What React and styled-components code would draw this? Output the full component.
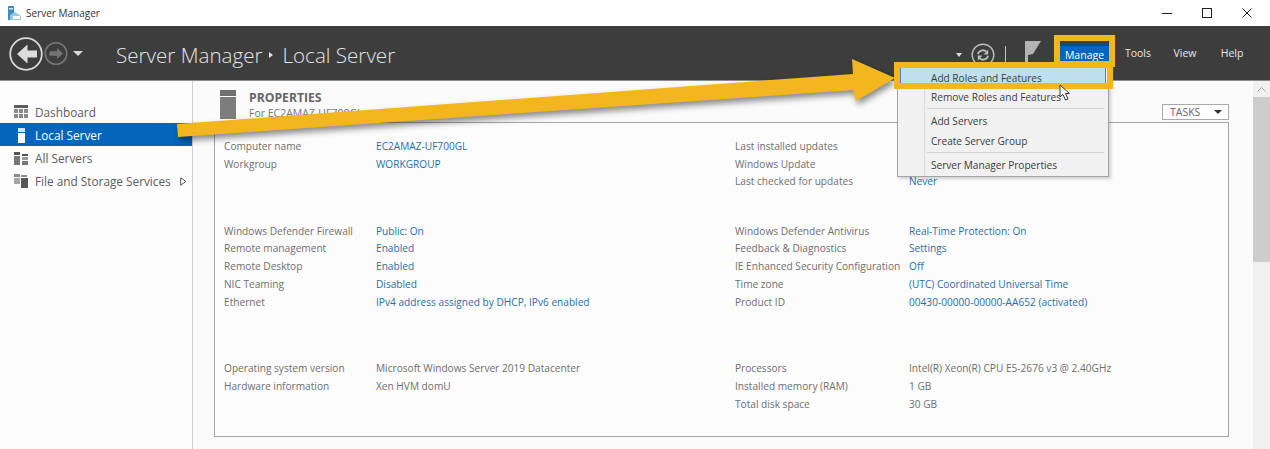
import React from 'react';
import styled, { createGlobalStyle } from 'styled-components';

const Global = createGlobalStyle`
  html, body { margin: 0; padding: 0; background: #fff; overflow: hidden; }
  * { box-sizing: border-box; }
  #root { width: 1270px; height: 449px; }
`;
const FONT = `"Open Sans", "Noto Sans", "Liberation Sans", sans-serif`;

const Window = styled.div`
  position: relative; width: 1270px; height: 449px; overflow: hidden;
  display: flex; flex-direction: column;
  font-family: ${FONT}; font-size: 10.15px; color: #6d6d6d;
`;
const TitleBar = styled.div`
  height: 26px; flex: none; display: flex; align-items: center; padding: 0 3px 0 7px; background: #fff;
`;
const AppName = styled.span`
  margin-left: 5px; font-size: 10px; color: #333; flex: 1;
`;
const WinControls = styled.div`
  display: flex; align-items: center; height: 100%;
`;
const WinButton = styled.div`
  width: 40px; height: 100%; display: flex; align-items: center; justify-content: center; color: #222;
`;
const Header = styled.div`
  height: 55px; flex: none; background: #3d3d3d; display: flex; align-items: center;
  border-bottom: 1px solid #8d8d8d; position: relative;
`;
const NavIcons = styled.div`
  display: flex; align-items: center; width: 116px; padding: 1px 0 0 9px; flex: none;
`;
const Crumbs = styled.div`
  display: flex; align-items: center; flex: 1; padding-top: 3px; font-size: 20.6px; font-weight: 300; color: #e4e4e4;
`;
const CrumbSep = styled.span`
  width: 0; height: 0; margin: 0 9px 0 7px;
  border-left: 4px solid #e4e4e4; border-top: 3.5px solid transparent; border-bottom: 3.5px solid transparent;
`;
const Tools = styled.div`
  display: flex; align-items: center; flex: none; height: 100%;
`;
const MenuItem = styled.div`
  height: 21px; display: flex; align-items: center; justify-content: center;
  font-size: 10.5px; color: ${p => p.$active ? '#fff' : '#e6e6e6'}; width: ${p => p.$w}px;
  background: ${p => p.$active ? '#0366ba' : 'transparent'};
  border-top: ${p => p.$active ? '3px solid #114c80' : 'none'};
  margin-right: ${p => p.$mr || 0}px;
`;
const Body = styled.div`
  flex: 1; display: flex; min-height: 0;
`;
const Sidebar = styled.nav`
  width: 193px; flex: none; background: #fdfdfd; border-right: 1px solid #cfcfcf; padding-top: 18.5px;
`;
const SideRow = styled.div`
  height: 23.2px; display: flex; align-items: center; padding: 1.5px 0 0 14px; gap: 7px; font-size: 11.8px;
  color: ${p => p.$active ? '#fff' : '#5c5c5c'};
  background: ${p => p.$active ? '#0366ba' : 'transparent'};
  width: 192px; position: relative;
`;
const SideIconBox = styled.span`
  width: 14px; height: 16px; display: flex; align-items: center; justify-content: center; flex: none;
`;
const Expand = styled.svg`
  margin-left: auto; margin-right: 5px; flex: none;
`;
const Main = styled.main`
  flex: 1; background: #fbfbfb; padding: 8px 24px 0 21px; min-width: 0; position: relative;
`;
const SectionHead = styled.div`
  display: flex; align-items: flex-start; height: 33px; position: relative; padding-left: 6px;
`;
const HeadText = styled.div`
  margin-left: 13px; padding-top: 1px; display: flex; flex-direction: column;
`;
const HeadTitle = styled.div`
  font-size: 12.2px; font-weight: 700; color: #666; line-height: 15px;
`;
const HeadSub = styled.div`
  font-size: 10.5px; color: #777; line-height: 16px;
`;
const TasksButton = styled.div`
  margin-left: auto; margin-top: 15px; width: 67px; height: 16px; border: 1px solid #aaa;
  display: flex; align-items: center; justify-content: space-between; padding: 0 6px 0 7px;
  font-size: 10.5px; color: #666; background: #fff; line-height: 1;
`;
const Caret = styled.span`
  width: 0; height: 0; border-top: 4px solid #333; border-left: 4.5px solid transparent; border-right: 4.5px solid transparent;
`;
const PropBox = styled.section`
  width: 1015px; height: 315px; border: 1px solid #a6a6a6; background: #fcfcfc; padding: 14px 0 0 9px;
  display: flex; flex-direction: column;
`;
const PropGroup = styled.div`
  display: grid; grid-template-columns: 152px 359px 174px 1fr; grid-auto-rows: 17.75px;
  margin-bottom: ${p => p.$mb}px; align-items: center;
`;
const Label = styled.span`color: #6f6f6f; white-space: nowrap;`;
const Value = styled.span`color: ${p => p.$link ? '#2b6ea6' : '#6f6f6f'}; white-space: nowrap;`;
const Scrollbar = styled.div`
  width: 17px; flex: none; background: #f1f1f1; display: flex; flex-direction: column; align-items: center;
`;
const ScrollUp = styled.div`
  height: 16px; display: flex; align-items: center; justify-content: center; color: #aaa;
`;
const ScrollThumb = styled.div`
  width: 17px; height: 165px; background: #cdcdcd;
`;
const Menu = styled.div`
  position: absolute; left: 897px; top: 67px; width: 212px; height: 110px; background: #f1f1f1;
  border: 1px solid #a4a4a4; box-shadow: 2px 2px 3px rgba(0,0,0,.18); z-index: 3;
  font-size: 10.1px; color: #3c3c3c;
`;
const MenuGutter = styled.div`
  position: absolute; left: 26px; top: 0; bottom: 0; width: 1px; background: #dcdcdc;
`;
const MenuEntry = styled.div`
  height: ${p => p.$h || 20}px; display: flex; align-items: center; padding-left: 33px; position: relative;
`;
const MenuEntryHover = styled(MenuEntry)`
  margin: 0 2px; padding-left: 30px; background: #bfdff0;
  border-left: 1px solid #4f86ad; border-right: 1px solid #4f86ad;
`;
const MenuSep = styled.div`
  height: 1px; background: #d4d4d4; margin: 1px 4px 2px 29px; position: relative;
`;
const Highlight = styled.div`
  position: absolute; left: ${p => p.$x}px; top: ${p => p.$y}px; width: ${p => p.$w}px; height: ${p => p.$h}px;
  border: 6px solid #f3b61f; z-index: 5; pointer-events: none;
`;
const ArrowLayer = styled.svg`
  position: absolute; left: 0; top: 0; z-index: 4; pointer-events: none;
  filter: drop-shadow(2px 4px 3px rgba(0,0,0,.45));
`;
const CursorLayer = styled.svg`
  position: absolute; left: 1058px; top: 84px; z-index: 6;
`;
const Divider = styled.span`
  width: 1px; height: 17px; background: #c4c4c4; margin: 3px 19px 0 10px; flex: none;
`;

const Back = () => (
  <svg width="36" height="36" viewBox="0 0 36 36" fill="none">
    <circle cx="17" cy="18" r="15.8" stroke="#d8d8d8" strokeWidth="1.8" />
    <path d="M8 18 L18.5 8.5 V14.5 H28 V21.5 H18.5 V27.5 Z" fill="#dcdcdc" />
  </svg>
);
const Forward = () => (
  <svg width="25" height="25" viewBox="0 0 25 25" fill="none" style={{ marginLeft: -1 }}>
    <circle cx="12" cy="12.5" r="10.8" stroke="#757575" strokeWidth="1.6" />
    <path d="M19 12.5 L13 7 V10.3 H5.5 V14.7 H13 V18 Z" fill="#757575" />
  </svg>
);
const SmallCaret = ({ color = '#d8d8d8', w = 8, h = 5, ml = 0, mr = 0, mt = 0 }) => (
  <svg width={w} height={h} viewBox="0 0 8 5" preserveAspectRatio="none" style={{ marginLeft: ml, marginRight: mr, marginTop: mt, flex: 'none' }}><path d="M0 0H8L4 5Z" fill={color} /></svg>
);
const Refresh = () => (
  <svg width="24" height="24" viewBox="0 0 24 24" fill="none" style={{ marginTop: 3, flex: 'none' }}>
    <circle cx="12" cy="12" r="10.8" stroke="#bdbdbd" strokeWidth="1.4" />
    <path d="M6.8 11.2 A5.3 5.3 0 0 1 15.4 8.6" stroke="#bdbdbd" strokeWidth="1.8" />
    <path d="M17.2 6.6 V11.4 H12.6 Z" fill="#bdbdbd" />
    <path d="M17.2 12.8 A5.3 5.3 0 0 1 8.6 15.4" stroke="#bdbdbd" strokeWidth="1.8" />
    <path d="M6.8 17.4 V12.6 H11.4 Z" fill="#bdbdbd" />
  </svg>
);
const Flag = () => (
  <svg width="17" height="26" viewBox="0 0 17 26" style={{ marginRight: 18, marginTop: 0, flex: 'none' }}>
    <path d="M0 1 H16 L8 14 L3 15 V26 H0 Z" fill="#b3b3b3" />
  </svg>
);
const AppIcon = () => (
  <svg width="14" height="15" viewBox="0 0 14 15">
    <rect x="1" y="0" width="6" height="14" fill="#3f8cc4" />
    <rect x="2" y="2" width="4" height="1.5" fill="#cfe6f5" />
    <path d="M3 14 V9 L8 6 L14 10 V14 Z" fill="#9cc6e0" />
    <rect x="6" y="10" width="7" height="3" fill="#fff" />
  </svg>
);
const DashIcon = () => (
  <svg width="14" height="13" viewBox="0 0 14 13">
    <rect width="14" height="3" fill="#5e5e5e" />
    <g fill="#8a8a8a">
      <rect x="0" y="4" width="4" height="4" /><rect x="5" y="4" width="4" height="4" /><rect x="10" y="4" width="4" height="4" />
      <rect x="0" y="9" width="4" height="4" /><rect x="5" y="9" width="4" height="4" /><rect x="10" y="9" width="4" height="4" />
    </g>
  </svg>
);
const ServerIcon = () => (
  <svg width="7" height="15" viewBox="0 0 7 15"><rect width="7" height="4" fill="#cfe4f6" /><rect y="5" width="7" height="10" fill="#fff" /></svg>
);
const AllIcon = () => (
  <svg width="14" height="13" viewBox="0 0 14 13">
    <rect x="0" y="0" width="6" height="3" fill="#555" /><rect x="0" y="4" width="6" height="9" fill="#777" />
    <rect x="8" y="2" width="6" height="2" fill="#555" /><rect x="8" y="5" width="6" height="3" fill="#9a9a9a" /><rect x="8" y="9" width="6" height="4" fill="#777" />
  </svg>
);
const FileIcon = () => (
  <svg width="14" height="14" viewBox="0 0 14 14">
    <rect x="0" y="0" width="6" height="3" fill="#8a8a8a" /><rect x="0" y="4" width="6" height="6" fill="#a5a5a5" />
    <rect x="7" y="1" width="6" height="2" fill="#8a8a8a" />
    <rect x="7" y="4" width="7" height="10" fill="#555" />
  </svg>
);
const PropServer = () => (
  <svg width="16" height="29" viewBox="0 0 16 29" style={{ flex: 'none', marginTop: 1 }}>
    <rect width="16" height="6" fill="#6f6f6f" /><rect y="7" width="16" height="22" fill="#7d7d7d" />
  </svg>
);

const groups = [
  { mb: 31.4, rows: [
    ['Computer name', 'EC2AMAZ-UF700GL', 'Last installed updates', ''],
    ['Workgroup', 'WORKGROUP', 'Windows Update', ''],
    ['', '', 'Last checked for updates', 'Never'],
  ]},
  { mb: 49, rows: [
    ['Windows Defender Firewall', 'Public: On', 'Windows Defender Antivirus', 'Real-Time Protection: On'],
    ['Remote management', 'Enabled', 'Feedback & Diagnostics', 'Settings'],
    ['Remote Desktop', 'Enabled', 'IE Enhanced Security Configuration', 'Off'],
    ['NIC Teaming', 'Disabled', 'Time zone', '(UTC) Coordinated Universal Time'],
    ['Ethernet', 'IPv4 address assigned by DHCP, IPv6 enabled', 'Product ID', '00430-00000-00000-AA652 (activated)'],
  ]},
  { mb: 0, plain: true, rows: [
    ['Operating system version', 'Microsoft Windows Server 2019 Datacenter', 'Processors', 'Intel(R) Xeon(R) CPU E5-2676 v3 @ 2.40GHz'],
    ['Hardware information', 'Xen HVM domU', 'Installed memory (RAM)', '1 GB'],
    ['', '', 'Total disk space', '30 GB'],
  ]},
];

export default function App() {
  return (
    <Window>
      <Global />
      <TitleBar>
        <AppIcon />
        <AppName>Server Manager</AppName>
        <WinControls>
          <WinButton><svg width="10" height="10"><path d="M0 5.5H10" stroke="#222" /></svg></WinButton>
          <WinButton><svg width="10" height="10"><rect x=".5" y=".5" width="9" height="9" fill="none" stroke="#222" /></svg></WinButton>
          <WinButton><svg width="10" height="10"><path d="M.5 .5L9.5 9.5M9.5 .5L.5 9.5" stroke="#222" /></svg></WinButton>
        </WinControls>
      </TitleBar>
      <Header>
        <NavIcons>
          <Back />
          <Forward />
          <SmallCaret ml={4} w={10} />
        </NavIcons>
        <Crumbs>Server Manager<CrumbSep />Local Server</Crumbs>
        <Tools>
          <SmallCaret color="#ddd" w={6} h={4} mr={9} mt={3} />
          <Refresh />
          <Divider />
          <Flag />
          <MenuItem $active $w={49} $mr={5}>Manage</MenuItem>
          <MenuItem $w={48}>Tools</MenuItem>
          <MenuItem $w={46}>View</MenuItem>
          <MenuItem $w={48} $mr={14}>Help</MenuItem>
        </Tools>
      </Header>
      <Body>
        <Sidebar>
          <SideRow><SideIconBox><DashIcon /></SideIconBox>Dashboard</SideRow>
          <SideRow $active><SideIconBox><ServerIcon /></SideIconBox>Local Server</SideRow>
          <SideRow><SideIconBox><AllIcon /></SideIconBox>All Servers</SideRow>
          <SideRow><SideIconBox><FileIcon /></SideIconBox>File and Storage Services
            <Expand width="7" height="9" viewBox="0 0 7 9"><path d="M.7 .8V8.2L6 4.5Z" fill="none" stroke="#555" /></Expand>
          </SideRow>
        </Sidebar>
        <Main>
          <SectionHead>
            <PropServer />
            <HeadText>
              <HeadTitle>PROPERTIES</HeadTitle>
              <HeadSub>For EC2AMAZ-UF700GL</HeadSub>
            </HeadText>
            <TasksButton>TASKS<Caret /></TasksButton>
          </SectionHead>
          <PropBox>
            {groups.map((g, i) => (
              <PropGroup key={i} $mb={g.mb}>
                {g.rows.map((r, j) => (
                  <React.Fragment key={j}>
                    <Label>{r[0]}</Label>
                    <Value $link={!g.plain}>{r[1]}</Value>
                    <Label>{r[2]}</Label>
                    <Value $link={!g.plain}>{r[3]}</Value>
                  </React.Fragment>
                ))}
              </PropGroup>
            ))}
          </PropBox>
        </Main>
        <Scrollbar>
          <ScrollUp><svg width="9" height="5"><path d="M.5 4.5L4.5 .5L8.5 4.5" fill="none" stroke="#a8a8a8" /></svg></ScrollUp>
          <ScrollThumb />
        </Scrollbar>
      </Body>

      <Menu>
        <MenuGutter />
        <MenuEntryHover $h={19}>Add Roles and Features</MenuEntryHover>
        <MenuEntry>Remove Roles and Features</MenuEntry>
        <MenuSep />
        <MenuEntry>Add Servers</MenuEntry>
        <MenuEntry>Create Server Group</MenuEntry>
        <MenuSep />
        <MenuEntry>Server Manager Properties</MenuEntry>
      </Menu>
      <ArrowLayer width="1270" height="449" viewBox="0 0 1270 449">
        <path d="M177 124 L853 74 L852 59 L895 78 L856 101 L853 90 L178 137 Z" fill="#f3b61f" />
      </ArrowLayer>
      <Highlight $x={1054} $y={35} $w={61} $h={32} />
      <Highlight $x={894} $y={62} $w={219} $h={27} />
      <CursorLayer width="14" height="18" viewBox="0 0 14 18">
        <path d="M2 1 V13 L5 10.5 L7.5 16 L10 15 L7.5 9.5 L11.5 9.5 Z" fill="#fff" stroke="#333" strokeWidth="1" />
      </CursorLayer>
    </Window>
  );
}
